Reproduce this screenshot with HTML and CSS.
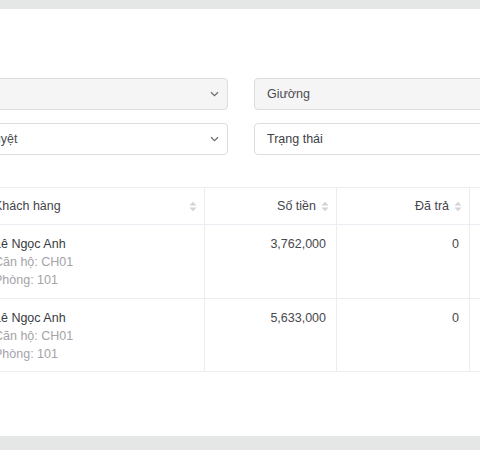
FILE: index.html
```html
<!DOCTYPE html>
<html lang="vi">
<head>
<meta charset="utf-8">
<title>Hóa đơn</title>
<link rel="stylesheet" href="styles.css">
</head>
<body>
<div class="panel">
  <div class="filters">
    <div class="select disabled">
      <span class="label">Căn hộ</span>
      <svg class="chev" width="9" height="6" viewBox="0 0 9 6"><path d="M1 1.2 L4.5 4.6 L8 1.2" fill="none" stroke="#6b6b70" stroke-width="1.2"/></svg>
    </div>
    <div class="select disabled">
      <span class="label">Giường</span>
    </div>
    <div class="select">
      <span class="label">Chưa duyệt</span>
      <svg class="chev" width="9" height="6" viewBox="0 0 9 6"><path d="M1 1.2 L4.5 4.6 L8 1.2" fill="none" stroke="#6b6b70" stroke-width="1.2"/></svg>
    </div>
    <div class="select">
      <span class="label dark">Trạng thái</span>
    </div>
  </div>

  <div class="table">
    <div class="row head">
      <div class="cell c1"><span>Khách hàng</span><svg class="sort" width="8" height="11" viewBox="0 0 8 11"><path d="M0.5 4.5 L4 0.8 L7.5 4.5Z M0.5 6.5 L7.5 6.5 L4 10.2Z" fill="#d3d3d8"/></svg></div>
      <div class="cell num"><span>Số tiền</span><svg class="sort" width="8" height="11" viewBox="0 0 8 11"><path d="M0.5 4.5 L4 0.8 L7.5 4.5Z M0.5 6.5 L7.5 6.5 L4 10.2Z" fill="#d3d3d8"/></svg></div>
      <div class="cell num"><span>Đã trả</span><svg class="sort" width="8" height="11" viewBox="0 0 8 11"><path d="M0.5 4.5 L4 0.8 L7.5 4.5Z M0.5 6.5 L7.5 6.5 L4 10.2Z" fill="#d3d3d8"/></svg></div>
      <div class="cell"></div>
    </div>
    <div class="row body">
      <div class="cell c1">
        <div class="name">Lê Ngọc Anh</div>
        <div class="sub">Căn hộ: CH01</div>
        <div class="sub">Phòng: 101</div>
      </div>
      <div class="cell num">3,762,000</div>
      <div class="cell num">0</div>
      <div class="cell"></div>
    </div>
    <div class="row body last">
      <div class="cell c1">
        <div class="name">Lê Ngọc Anh</div>
        <div class="sub">Căn hộ: CH01</div>
        <div class="sub">Phòng: 101</div>
      </div>
      <div class="cell num">5,633,000</div>
      <div class="cell num">0</div>
      <div class="cell"></div>
    </div>
  </div>
</div>
</body>
</html>
```

FILE: styles.css
```css
html, body {
  margin: 0;
  padding: 0;
}
body {
  background: #e5e6e6;
  font-family: "Liberation Sans", Arial, sans-serif;
  font-size: 12.5px;
  color: #3a3a3f;
  overflow: hidden;
  width: 480px;
  height: 450px;
}
.panel {
  margin-top: 9px;
  height: 427px;
  background: #ffffff;
  padding-top: 69px;
  box-sizing: border-box;
  overflow: hidden;
}
.filters {
  display: grid;
  grid-template-columns: 289px 300px;
  column-gap: 26px;
  row-gap: 13px;
  margin-left: -61px;
}
.select {
  height: 32px;
  box-sizing: border-box;
  border: 1px solid #dcdce2;
  border-radius: 4px;
  background: #ffffff;
  display: flex;
  align-items: center;
  justify-content: space-between;
  padding: 0 8px 0 12px;
}
.select.disabled {
  background: #f5f5f6;
}
.label {
  color: #4b4b50;
  font-size: 12.5px;
}
.label.dark {
  color: #3e3e44;
}
.chev {
  display: block;
}
.table {
  margin-top: 32px;
  margin-left: -18px;
  width: 600px;
}
.row {
  display: grid;
  grid-template-columns: 223px 132px 133px 112px;
  border-bottom: 1px solid #ececf2;
}
.row.head {
  border-top: 1px solid #ececf2;
  height: 38px;
  box-sizing: border-box;
}
.row.body {
  height: 74px;
  box-sizing: border-box;
}
.row.body.last {
  height: 73px;
}
.cell {
  border-right: 1px solid #ececf2;
  padding: 0 10px 0 12px;
  box-sizing: border-box;
}
.head .cell {
  display: flex;
  align-items: center;
  gap: 5px;
  padding-right: 7px;
  color: #44444a;
}
.head .cell.c1 {
  justify-content: space-between;
}
.head .cell.num {
  justify-content: flex-end;
}
.sort {
  display: block;
  flex: none;
}
.body .cell {
  padding-top: 10px;
  line-height: 18px;
}
.body .cell.num {
  text-align: right;
  color: #48484d;
}
.name {
  color: #3a3a3f;
}
.sub {
  color: #a3a3a8;
}
```
